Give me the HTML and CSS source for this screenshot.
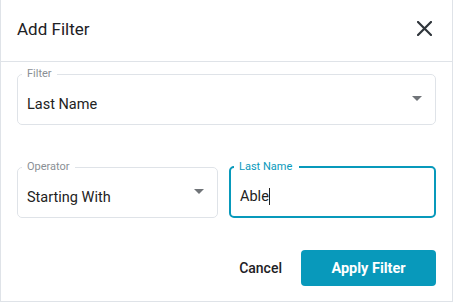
FILE: index.html
```html
<!DOCTYPE html>
<html lang="en">
<head>
    <meta charset="UTF-8">
    <meta name="viewport" content="width=device-width, initial-scale=1.0">
    <title>Add Filter</title>
    <link rel="stylesheet" href="styles.css">
</head>
<body>
    <div class="dialog">
        <div class="dialog-header">
            <h1 class="dialog-title">Add Filter</h1>
            <button class="close-btn" aria-label="Close">
                <svg width="15" height="15" viewBox="0 0 15 15">
                    <path d="M1 1L14 14M14 1L1 14" stroke="#2f353b" stroke-width="2.2" stroke-linecap="square"/>
                </svg>
            </button>
        </div>

        <div class="dialog-body">
            <fieldset class="field">
                <legend class="field-label">Filter</legend>
                <div class="field-value">
                    <span>Last Name</span>
                    <span class="arrow"></span>
                </div>
            </fieldset>

            <div class="field-row">
                <fieldset class="field">
                    <legend class="field-label">Operator</legend>
                    <div class="field-value">
                        <span>Starting With</span>
                        <span class="arrow"></span>
                    </div>
                </fieldset>
                <fieldset class="field focused">
                    <legend class="field-label">Last Name</legend>
                    <div class="field-value">
                        <span>Able<span class="caret"></span></span>
                    </div>
                </fieldset>
            </div>

            <div class="dialog-actions">
                <button class="btn-cancel">Cancel</button>
                <button class="btn-apply">Apply Filter</button>
            </div>
        </div>
    </div>
</body>
</html>
```

FILE: styles.css
```css
* {
    margin: 0;
    padding: 0;
    box-sizing: border-box;
}

body {
    font-family: Roboto, 'Liberation Sans', Arial, sans-serif;
    background: #fff;
    color: #222;
}

.dialog {
    width: 453px;
    height: 302px;
    border: 1px solid #dfe3e8;
    border-top: none;
    background: #fff;
}

.dialog-header {
    height: 62px;
    border-bottom: 1px solid #dfe3e8;
    display: flex;
    align-items: center;
    justify-content: space-between;
    padding: 0 20px 0 16px;
}

.dialog-title {
    font-size: 17px;
    font-weight: 400;
    color: #1d2125;
    margin-top: -4px;
}

.close-btn {
    background: none;
    border: none;
    width: 15px;
    height: 15px;
    display: flex;
    margin-top: -4px;
    cursor: pointer;
}

.dialog-body {
    padding: 6px 16px 0 16px;
}

.field {
    border: 1px solid #dfe3e8;
    border-radius: 5px;
    padding: 0 13px 0 4px;
    min-width: 0;
}

.field-label {
    font-size: 11px;
    line-height: 12px;
    color: #8a8f95;
    padding: 0 5px;
}

.field-value {
    height: 44px;
    display: flex;
    align-items: center;
    justify-content: space-between;
    padding: 4px 0 0 5px;
    font-size: 14.5px;
    color: #222;
}

.arrow {
    width: 0;
    height: 0;
    border-left: 5px solid transparent;
    border-right: 5px solid transparent;
    border-top: 5px solid #707478;
    margin-bottom: 12px;
}

.field-row {
    display: grid;
    grid-template-columns: 201px 1fr;
    gap: 11px;
    margin-top: 36px;
}

.field.focused {
    border: 2px solid #0899bb;
    padding-left: 3px;
}

.field.focused .field-label {
    color: #0899bb;
    padding: 0 7px 0 5px;
}

.field.focused .field-value {
    height: 43px;
    padding-left: 6px;
}

.caret {
    display: inline-block;
    width: 1px;
    height: 17px;
    background: #222;
    vertical-align: -4px;
}

.dialog-actions {
    display: flex;
    justify-content: flex-end;
    align-items: center;
    margin-top: 32px;
    gap: 11px;
}

.btn-cancel {
    background: none;
    border: none;
    font-family: inherit;
    font-size: 14px;
    font-weight: 500;
    color: #1d2125;
    padding: 0 8px;
    height: 36px;
    cursor: pointer;
}

.btn-apply {
    width: 135px;
    height: 36px;
    background: #0899bb;
    color: #fff;
    border: none;
    border-radius: 4px;
    font-family: inherit;
    font-size: 14.5px;
    font-weight: 700;
    cursor: pointer;
}
```
